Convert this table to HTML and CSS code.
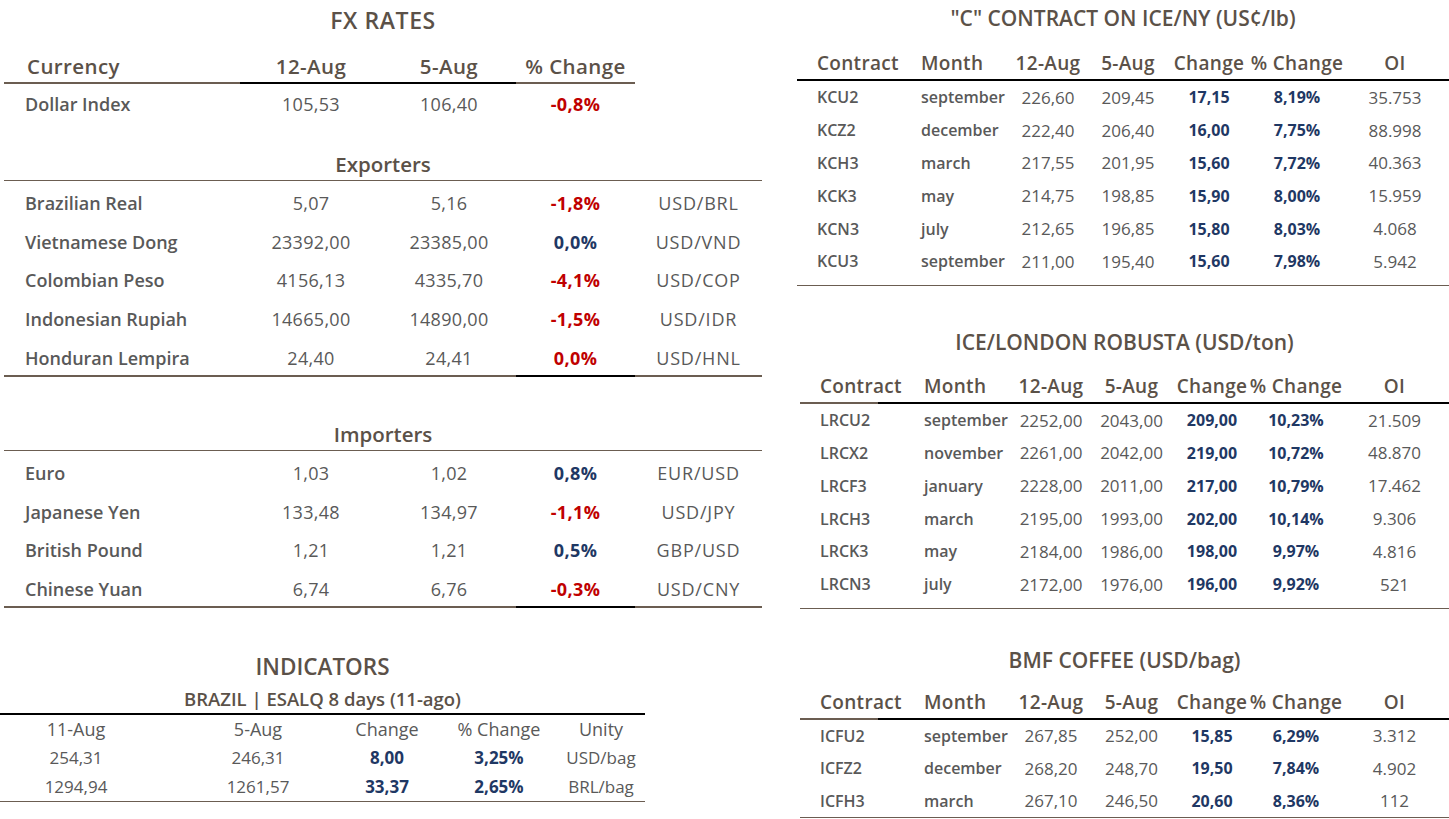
FILE: index.html
```html
<!DOCTYPE html>
<html lang="en">
<head>
<meta charset="utf-8">
<title>Market Report</title>
<link rel="stylesheet" href="styles.css">
</head>
<body>
<div class="page">
  <div class="left">
    <section class="fx">
      <h2 class="title fx-title">FX RATES</h2>
      <div class="fx-row fx-head">
        <div class="c c1 b-brown">Currency</div>
        <div class="c cc b-black">12-Aug</div>
        <div class="c cc b-black">5-Aug</div>
        <div class="c cc b-brown">% Change</div>
      </div>
      <div class="fx-row fx-index">
        <div class="c c1 name">Dollar Index</div>
        <div class="c cc num">105,53</div>
        <div class="c cc num">106,40</div>
        <div class="c cc pct neg">-0,8%</div>
      </div>

      <h3 class="group exporters">Exporters</h3>
      <div class="fx-row">
        <div class="c c1 name">Brazilian Real</div>
        <div class="c cc num">5,07</div>
        <div class="c cc num">5,16</div>
        <div class="c cc pct neg">-1,8%</div>
        <div class="c cc unit">USD/BRL</div>
      </div>
      <div class="fx-row">
        <div class="c c1 name">Vietnamese Dong</div>
        <div class="c cc num">23392,00</div>
        <div class="c cc num">23385,00</div>
        <div class="c cc pct pos">0,0%</div>
        <div class="c cc unit">USD/VND</div>
      </div>
      <div class="fx-row">
        <div class="c c1 name">Colombian Peso</div>
        <div class="c cc num">4156,13</div>
        <div class="c cc num">4335,70</div>
        <div class="c cc pct neg">-4,1%</div>
        <div class="c cc unit">USD/COP</div>
      </div>
      <div class="fx-row">
        <div class="c c1 name">Indonesian Rupiah</div>
        <div class="c cc num">14665,00</div>
        <div class="c cc num">14890,00</div>
        <div class="c cc pct neg">-1,5%</div>
        <div class="c cc unit">USD/IDR</div>
      </div>
      <div class="fx-row last">
        <div class="c c1 name b-brown">Honduran Lempira</div>
        <div class="c cc num b-brown">24,40</div>
        <div class="c cc num b-brown">24,41</div>
        <div class="c cc pct neg b-black">0,0%</div>
        <div class="c cc unit b-brown">USD/HNL</div>
      </div>

      <h3 class="group importers">Importers</h3>
      <div class="fx-row">
        <div class="c c1 name">Euro</div>
        <div class="c cc num">1,03</div>
        <div class="c cc num">1,02</div>
        <div class="c cc pct pos">0,8%</div>
        <div class="c cc unit">EUR/USD</div>
      </div>
      <div class="fx-row">
        <div class="c c1 name">Japanese Yen</div>
        <div class="c cc num">133,48</div>
        <div class="c cc num">134,97</div>
        <div class="c cc pct neg">-1,1%</div>
        <div class="c cc unit">USD/JPY</div>
      </div>
      <div class="fx-row">
        <div class="c c1 name">British Pound</div>
        <div class="c cc num">1,21</div>
        <div class="c cc num">1,21</div>
        <div class="c cc pct pos">0,5%</div>
        <div class="c cc unit">GBP/USD</div>
      </div>
      <div class="fx-row last">
        <div class="c c1 name b-brown">Chinese Yuan</div>
        <div class="c cc num b-brown">6,74</div>
        <div class="c cc num b-brown">6,76</div>
        <div class="c cc pct neg b-black">-0,3%</div>
        <div class="c cc unit b-brown">USD/CNY</div>
      </div>
    </section>

    <section class="ind">
      <h2 class="title ind-title">INDICATORS</h2>
      <div class="ind-sub">BRAZIL | ESALQ 8 days (11-ago)</div>
      <div class="ind-row ind-head">
        <div class="c">11-Aug</div>
        <div class="c">5-Aug</div>
        <div class="c">Change</div>
        <div class="c">% Change</div>
        <div class="c">Unity</div>
      </div>
      <div class="ind-body">
        <div class="ind-row">
          <div class="c">254,31</div>
          <div class="c">246,31</div>
          <div class="c pos">8,00</div>
          <div class="c pos">3,25%</div>
          <div class="c">USD/bag</div>
        </div>
        <div class="ind-row">
          <div class="c">1294,94</div>
          <div class="c">1261,57</div>
          <div class="c pos">33,37</div>
          <div class="c pos">2,65%</div>
          <div class="c">BRL/bag</div>
        </div>
      </div>
    </section>
  </div>

  <div class="right">
    <section class="fut ice">
      <h2 class="title">"C" CONTRACT ON ICE/NY (US¢/lb)</h2>
      <div class="f-row f-head">
        <div class="c cl">Contract</div><div class="c cl m">Month</div><div class="c">12-Aug</div><div class="c">5-Aug</div><div class="c">Change</div><div class="c">% Change</div><div class="c">OI</div>
      </div>
      <div class="f-body">
        <div class="f-row"><div class="c cl code">KCU2</div><div class="c cl m month">september</div><div class="c num">226,60</div><div class="c num">209,45</div><div class="c pos">17,15</div><div class="c pos">8,19%</div><div class="c num">35.753</div></div>
        <div class="f-row"><div class="c cl code">KCZ2</div><div class="c cl m month">december</div><div class="c num">222,40</div><div class="c num">206,40</div><div class="c pos">16,00</div><div class="c pos">7,75%</div><div class="c num">88.998</div></div>
        <div class="f-row"><div class="c cl code">KCH3</div><div class="c cl m month">march</div><div class="c num">217,55</div><div class="c num">201,95</div><div class="c pos">15,60</div><div class="c pos">7,72%</div><div class="c num">40.363</div></div>
        <div class="f-row"><div class="c cl code">KCK3</div><div class="c cl m month">may</div><div class="c num">214,75</div><div class="c num">198,85</div><div class="c pos">15,90</div><div class="c pos">8,00%</div><div class="c num">15.959</div></div>
        <div class="f-row"><div class="c cl code">KCN3</div><div class="c cl m month">july</div><div class="c num">212,65</div><div class="c num">196,85</div><div class="c pos">15,80</div><div class="c pos">8,03%</div><div class="c num">4.068</div></div>
        <div class="f-row"><div class="c cl code">KCU3</div><div class="c cl m month">september</div><div class="c num">211,00</div><div class="c num">195,40</div><div class="c pos">15,60</div><div class="c pos">7,98%</div><div class="c num">5.942</div></div>
      </div>
    </section>

    <section class="fut wide robusta">
      <h2 class="title">ICE/LONDON ROBUSTA (USD/ton)</h2>
      <div class="f-row f-head split">
        <div class="c cl">Contract</div><div class="c cl m">Month</div><div class="c">12-Aug</div><div class="c">5-Aug</div><div class="c">Change</div><div class="c">% Change</div><div class="c">OI</div>
      </div>
      <div class="f-body">
        <div class="f-row"><div class="c cl code">LRCU2</div><div class="c cl m month">september</div><div class="c num">2252,00</div><div class="c num">2043,00</div><div class="c pos">209,00</div><div class="c pos">10,23%</div><div class="c num">21.509</div></div>
        <div class="f-row"><div class="c cl code">LRCX2</div><div class="c cl m month">november</div><div class="c num">2261,00</div><div class="c num">2042,00</div><div class="c pos">219,00</div><div class="c pos">10,72%</div><div class="c num">48.870</div></div>
        <div class="f-row"><div class="c cl code">LRCF3</div><div class="c cl m month">january</div><div class="c num">2228,00</div><div class="c num">2011,00</div><div class="c pos">217,00</div><div class="c pos">10,79%</div><div class="c num">17.462</div></div>
        <div class="f-row"><div class="c cl code">LRCH3</div><div class="c cl m month">march</div><div class="c num">2195,00</div><div class="c num">1993,00</div><div class="c pos">202,00</div><div class="c pos">10,14%</div><div class="c num">9.306</div></div>
        <div class="f-row"><div class="c cl code">LRCK3</div><div class="c cl m month">may</div><div class="c num">2184,00</div><div class="c num">1986,00</div><div class="c pos">198,00</div><div class="c pos">9,97%</div><div class="c num">4.816</div></div>
        <div class="f-row"><div class="c cl code">LRCN3</div><div class="c cl m month">july</div><div class="c num">2172,00</div><div class="c num">1976,00</div><div class="c pos">196,00</div><div class="c pos">9,92%</div><div class="c num">521</div></div>
      </div>
    </section>

    <section class="fut wide bmf">
      <h2 class="title">BMF COFFEE (USD/bag)</h2>
      <div class="f-row f-head split">
        <div class="c cl">Contract</div><div class="c cl m">Month</div><div class="c">12-Aug</div><div class="c">5-Aug</div><div class="c">Change</div><div class="c">% Change</div><div class="c">OI</div>
      </div>
      <div class="f-body">
        <div class="f-row"><div class="c cl code">ICFU2</div><div class="c cl m month">september</div><div class="c num">267,85</div><div class="c num">252,00</div><div class="c pos">15,85</div><div class="c pos">6,29%</div><div class="c num">3.312</div></div>
        <div class="f-row"><div class="c cl code">ICFZ2</div><div class="c cl m month">december</div><div class="c num">268,20</div><div class="c num">248,70</div><div class="c pos">19,50</div><div class="c pos">7,84%</div><div class="c num">4.902</div></div>
        <div class="f-row"><div class="c cl code">ICFH3</div><div class="c cl m month">march</div><div class="c num">267,10</div><div class="c num">246,50</div><div class="c pos">20,60</div><div class="c pos">8,36%</div><div class="c num">112</div></div>
      </div>
    </section>
  </div>
</div>
</body>
</html>
```

FILE: styles.css
```css
* { box-sizing: border-box; }
html, body { margin: 0; padding: 0; background: #ffffff; }
body {
  font-family: "Open Sans", "Noto Sans", "Liberation Sans", sans-serif;
  color: #595959;
  width: 1449px;
  height: 819px;
  overflow: hidden;
}
h2, h3 { margin: 0; font-weight: 600; }

.page { display: flex; gap: 35px; }
.left { width: 762px; display: flex; flex-direction: column; }
.right { width: 652px; display: flex; flex-direction: column; }

.title {
  height: 28px; line-height: 28px;
  text-align: center;
  color: #5b5148;
  font-size: 21px;
  font-weight: 600;
  white-space: nowrap;
}

/* ---------- FX ---------- */
.fx { margin-left: 4px; width: 758px; }
.fx-title { margin-top: 6px; width: 758px; font-size: 23px; letter-spacing: 0.6px; }
.fx-row {
  display: grid;
  grid-template-columns: 236px 142px 134px 119px 127px;
}
.fx-row .c {
  height: 38.8px;
  padding-top: 5px;
  display: flex; align-items: center;
  font-size: 18px;
  white-space: nowrap;
}
.fx-row .c1 { padding-left: 21px; }
.fx-row .cc { justify-content: center; }
.fx-head { margin-top: 16px; }
.fx-head .c {
  height: 34px; padding-top: 0;
  font-size: 20.5px; font-weight: 600; color: #5b5148;
  letter-spacing: 0.4px;
}
.fx-head .c1 { padding-left: 23px; }
.fx-index .c { height: 40px; padding-top: 0; }
.b-brown { border-bottom: 2px solid #6b5d51; }
.b-black { border-bottom: 2px solid #000000; }
.fx-row.last .c { height: 40.8px; }

.name { font-weight: 600; color: #595959; }
.num { font-weight: 400; color: #595959; letter-spacing: 0.3px; }
.unit { font-weight: 400; color: #595959; letter-spacing: 0.8px; }
.pct { font-weight: 700; letter-spacing: 0.4px; }
.neg { color: #c00000; }
.pos { color: #1f3864; font-weight: 700; }

.group {
  height: 33px; line-height: 32px;
  text-align: center;
  font-size: 20.5px; font-weight: 600; color: #5b5148;
  border-bottom: 1px solid #6b5d51;
}
.exporters { margin-top: 24px; }
.importers { margin-top: 41px; }

/* ---------- Indicators ---------- */
.ind { width: 645px; margin-top: 45px; }
.ind-title { width: 645px; font-size: 22.5px; }
.ind-sub {
  margin-top: 4px;
  height: 30px; line-height: 28px;
  text-align: center;
  font-size: 18.5px; font-weight: 600; color: #5b5148;
  border-bottom: 2px solid #000;
}
.ind-row {
  display: grid;
  grid-template-columns: 152px 212px 46px 178px 26px;
}
.ind-row .c {
  height: 29px;
  display: flex; align-items: center; justify-content: center;
  white-space: nowrap;
  font-size: 17px;
}
.ind-head .c { height: 28px; font-size: 18px; color: #595959; }
.ind-body { border-bottom: 1px solid #6b5d51; }

/* ---------- Futures ---------- */
.fut { width: 652px; }
.fut.wide { margin-left: 3px; width: 649px; }
.ice .title { margin-top: 4px; }
.robusta { margin-top: 42px; }
.bmf { margin-top: 37px; }

.f-row {
  display: grid;
  grid-template-columns: 106px 105px 80px 80px 82px 94px 102px;
}
.wide .f-row { grid-template-columns: 106px 105px 80px 81px 80px 88px 109px; }
.f-row .c {
  height: 32.8px;
  display: flex; align-items: center; justify-content: center;
  white-space: nowrap;
  font-size: 16px;
}
.f-row .num { font-size: 17px; letter-spacing: 0; }
.f-row .cl { justify-content: flex-start; padding-left: 20px; }
.f-row .cl.m { padding-left: 18px; }
.f-head { margin-top: 15px; border-bottom: 2px solid #000; }
.robusta .f-head { margin-top: 14px; }
.bmf .f-head { margin-top: 12px; }
.f-head .c { height: 32px; font-size: 19px; font-weight: 600; color: #5b5148; letter-spacing: 0.3px; }
.f-head.split {
  border-image: linear-gradient(to right, #6b5d51 0, #6b5d51 79px, #000 79px, #000 100%) 1;
}
.f-body { padding-bottom: 7px; border-bottom: 1px solid #6b5d51; }
.bmf .f-body { padding-bottom: 0; }
.bmf .f-body .c { height: 32.4px; }
.code { font-weight: 600; color: #595959; font-size: 16.5px; }
.month { font-weight: 600; color: #595959; }
```
